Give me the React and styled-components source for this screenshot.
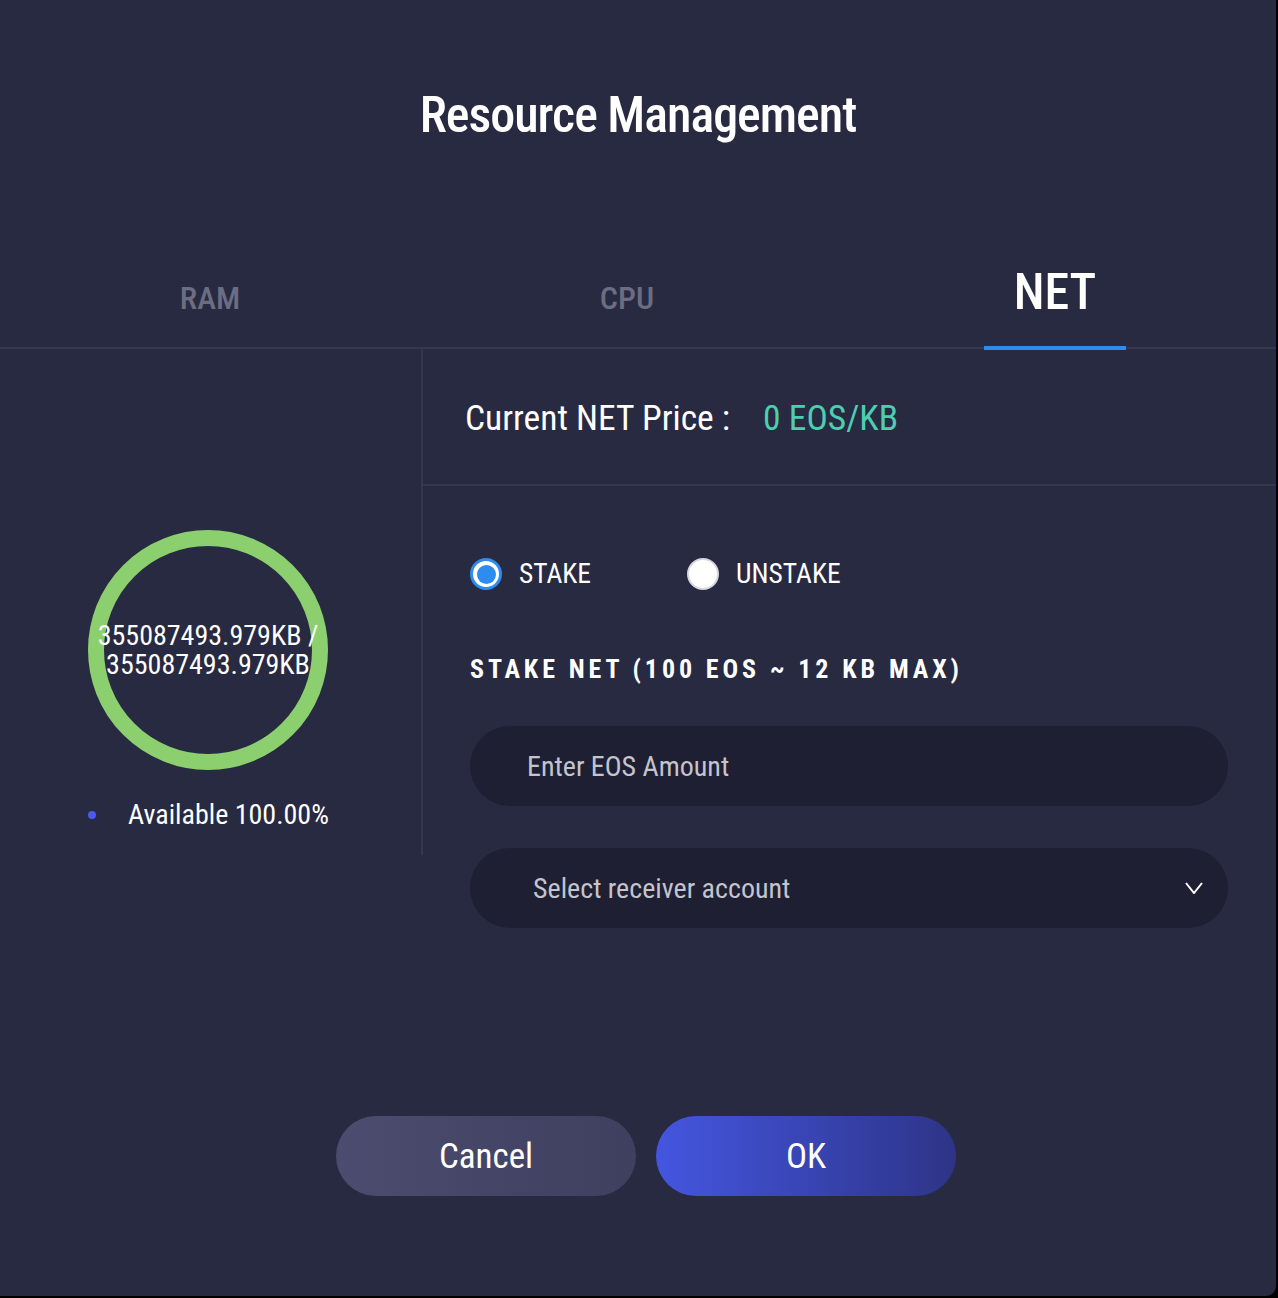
import React from 'react';
import styled, { createGlobalStyle } from 'styled-components';

const GlobalStyle = createGlobalStyle`
  html, body { margin: 0; padding: 0; background: #000; }
  body {
    font-family: "Roboto Condensed", Roboto, "Liberation Sans", sans-serif;
    font-stretch: condensed;
    -webkit-font-smoothing: antialiased;
  }
  #root { width: 1278px; height: 1298px; }
  * { box-sizing: border-box; }
`;

const Modal = styled.div`
  width: 1276px;
  height: 1296px;
  background: #282a41;
  border-radius: 0 0 10px 0;
  display: flex;
  flex-direction: column;
  color: #fff;
  overflow: hidden;
`;

const Header = styled.header`
  height: 240px;
  padding-top: 86px;
  text-align: center;
`;

const Title = styled.h1`
  margin: 0;
  font-size: 50px;
  font-weight: 500;
  line-height: 59px;
  letter-spacing: -1px;
`;

const TabBar = styled.nav`
  display: flex;
  height: 109px;
  border-bottom: 2px solid #34374f;
`;

const Tab = styled.div`
  flex: 1 1 auto;
  position: relative;
  display: flex;
  justify-content: center;
  align-items: flex-end;
  font-weight: 500;
  line-height: 1;
  font-size: ${(p) => (p.$active ? 50 : 32)}px;
  color: ${(p) => (p.$active ? '#ffffff' : '#6b6d82')};
  padding-bottom: ${(p) => (p.$active ? 30 : 33)}px;
  cursor: pointer;

  &::after {
    content: '';
    display: ${(p) => (p.$active ? 'block' : 'none')};
    position: absolute;
    left: 50%;
    bottom: -3px;
    width: 142px;
    margin-left: -71px;
    height: 4px;
    background: #2d8cf0;
  }
`;

const Body = styled.div`
  display: flex;
  align-items: flex-start;
`;

const LeftPane = styled.section`
  width: 423px;
  height: 506px;
  border-right: 2px solid #34374f;
  padding: 181px 0 0 88px;
`;

const Gauge = styled.div`
  position: relative;
  width: 240px;
  height: 240px;
`;

const GaugeText = styled.div`
  position: absolute;
  left: 50%;
  top: 50%;
  transform: translate(-50%, -50%);
  width: 232px;
  text-align: center;
  font-size: 28px;
  line-height: 29px;
  color: #fff;
`;

const Legend = styled.div`
  display: flex;
  align-items: center;
  gap: 32px;
  margin-top: 29px;
  font-size: 28px;
  line-height: 32px;
`;

const Dot = styled.span`
  width: 8px;
  height: 8px;
  border-radius: 50%;
  background: #4a5af0;
  flex: none;
`;

const RightPane = styled.section`
  flex: 1;
  display: flex;
  flex-direction: column;
`;

const PriceRow = styled.div`
  height: 137px;
  border-bottom: 2px solid #34374f;
  padding: 49px 0 0 42px;
  display: flex;
  font-size: 35.5px;
  line-height: 41px;
`;

const PriceValue = styled.span`
  color: #4ccfb1;
  margin-left: 33px;
`;

const Form = styled.div`
  padding: 72px 48px 0 47px;
  display: flex;
  flex-direction: column;
`;

const RadioGroup = styled.div`
  display: flex;
  gap: 96px;
`;

const RadioItem = styled.label`
  display: flex;
  align-items: center;
  gap: 17px;
  font-size: 27.5px;
  line-height: 32px;
  cursor: pointer;
`;

const RadioCircle = styled.span`
  width: 32px;
  height: 32px;
  border-radius: 50%;
  background: #fff;
  border: ${(p) => (p.$checked ? '3px solid #2d8cf0' : '2px solid #d6d6dc')};
  display: flex;
  align-items: center;
  justify-content: center;

  &::after {
    content: '';
    display: ${(p) => (p.$checked ? 'block' : 'none')};
    width: 19px;
    height: 19px;
    border-radius: 50%;
    background: #2d8cf0;
  }
`;

const FieldLabel = styled.div`
  margin-top: 64px;
  font-size: 26px;
  font-weight: 700;
  line-height: 30px;
  letter-spacing: 3.9px;
`;

const AmountInput = styled.input`
  margin-top: 42px;
  height: 80px;
  width: 100%;
  border: none;
  outline: none;
  border-radius: 40px;
  background: #1e1f33;
  padding: 0 0 0 57px;
  font-family: inherit;
  font-stretch: inherit;
  font-size: 28px;
  color: #fff;

  &::placeholder {
    color: #c4c4cc;
  }
`;

const SelectBox = styled.div`
  margin-top: 42px;
  height: 80px;
  border-radius: 40px;
  background: #1e1f33;
  padding: 0 25px 0 63px;
  display: flex;
  align-items: center;
  justify-content: space-between;
  font-size: 28px;
  color: #c4c4cc;
  cursor: pointer;
`;

const Footer = styled.footer`
  margin-top: auto;
  padding: 0 0 100px 16px;
  display: flex;
  justify-content: center;
  gap: 20px;
`;

const Button = styled.button`
  width: 300px;
  height: 80px;
  border: none;
  border-radius: 40px;
  font-family: inherit;
  font-stretch: inherit;
  font-size: 35px;
  color: #fff;
  cursor: pointer;
  background: ${(p) =>
    p.$primary
      ? 'linear-gradient(90deg, #4456e0 0%, #2d3487 100%)'
      : 'linear-gradient(90deg, #4b4c6f 0%, #3f405f 100%)'};
`;

function Chevron() {
  return (
    <svg width="18" height="12" viewBox="0 0 18 12" fill="none">
      <polyline points="1,1 9,11 17,1" stroke="#ffffff" strokeWidth="2" strokeLinejoin="miter" />
    </svg>
  );
}

export default function App() {
  return (
    <>
      <GlobalStyle />
      <Modal>
        <Header>
          <Title>Resource Management</Title>
        </Header>
        <TabBar>
          <Tab>RAM</Tab>
          <Tab>CPU</Tab>
          <Tab $active>NET</Tab>
        </TabBar>
        <Body>
          <LeftPane>
            <Gauge>
              <svg width="240" height="240" viewBox="0 0 240 240">
                <circle cx="120" cy="120" r="112" fill="none" stroke="#8bcf6e" strokeWidth="16" />
              </svg>
              <GaugeText>355087493.979KB / 355087493.979KB</GaugeText>
            </Gauge>
            <Legend>
              <Dot />
              <span>Available 100.00%</span>
            </Legend>
          </LeftPane>
          <RightPane>
            <PriceRow>
              <span>Current NET Price :</span>
              <PriceValue>0 EOS/KB</PriceValue>
            </PriceRow>
            <Form>
              <RadioGroup>
                <RadioItem>
                  <RadioCircle $checked />
                  STAKE
                </RadioItem>
                <RadioItem>
                  <RadioCircle />
                  UNSTAKE
                </RadioItem>
              </RadioGroup>
              <FieldLabel>STAKE NET (100 EOS ~ 12 KB MAX)</FieldLabel>
              <AmountInput placeholder="Enter EOS Amount" />
              <SelectBox>
                <span>Select receiver account</span>
                <Chevron />
              </SelectBox>
            </Form>
          </RightPane>
        </Body>
        <Footer>
          <Button>Cancel</Button>
          <Button $primary>OK</Button>
        </Footer>
      </Modal>
    </>
  );
}
